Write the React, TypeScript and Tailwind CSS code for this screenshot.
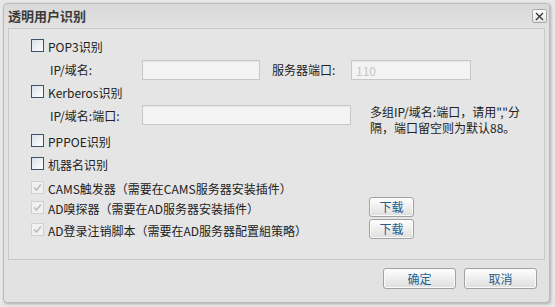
import React from "react";

const font = { fontFamily: '"Noto Sans CJK SC", "Liberation Sans", sans-serif' };

const Box = ({ disabled = false }: { disabled?: boolean }) =>
  disabled ? (
    <span className="flex h-[13px] w-[13px] shrink-0 items-center justify-center border border-[#d0d0d0] bg-[#f1f1f1]">
      <svg width="9" height="9" viewBox="0 0 9 9">
        <path d="M1 4.5 L3.5 7 L8 1.5" fill="none" stroke="#bdbdbd" strokeWidth="1.6" />
      </svg>
    </span>
  ) : (
    <span className="block h-[13px] w-[13px] shrink-0 border border-[#3a526e] bg-gradient-to-br from-[#d9e0e8] to-white" />
  );

const Check = ({ label, disabled = false }: { label: string; disabled?: boolean }) => (
  <div className="flex h-[17px] items-center gap-[4px]">
    <Box disabled={disabled} />
    <span className="pt-[2px] leading-[15px] whitespace-nowrap">{label}</span>
  </div>
);

const Btn = ({ children, w }: { children: React.ReactNode; w: string }) => (
  <button
    type="button"
    className={`${w} flex h-full items-center justify-center rounded-[3px] border border-[#a2a2a2] bg-gradient-to-b from-white to-[#dedede] text-[12px] text-[#1f5f8e] shadow-[inset_0_0_0_1px_#fafafa]`}
  >
    {children}
  </button>
);

const Field = ({ w, ph }: { w: string; ph?: string }) => (
  <input
    readOnly
    placeholder={ph}
    className={`${w} h-[20px] border border-[#c8c8c8] bg-[#f3f3f3] px-[4px] text-[12px] outline-none placeholder:text-[#c6c6c6] shadow-[inset_0_1px_1px_#e6e6e6]`}
  />
);

export default function App() {
  return (
    <div className="h-[307px] w-[555px] overflow-hidden bg-[#e8e8e8] pt-[3px] pl-[3px] text-[12px] text-[#222]" style={font}>
      <div className="flex h-[300px] w-[547px] flex-col rounded-[4px] border border-[#bcbcbc] bg-[#e2e2e2] shadow-[1px_1px_3px_rgba(0,0,0,0.25)]">
        {/* title bar */}
        <div className="flex h-[24px] items-center justify-between rounded-t-[4px] bg-gradient-to-b from-[#d9d9d9] to-[#e2e2e2] pr-[2px] pl-[4px]">
          <span className="text-[13px] font-bold text-[#3a3a3a]">透明用户识别</span>
          <span className="flex h-[14px] w-[15px] items-center justify-center rounded-[2px] border border-[#a8a8a8] bg-gradient-to-b from-white to-[#e4e4e4]">
            <svg width="9" height="9" viewBox="0 0 9 9">
              <path d="M1 1 L8 8 M8 1 L1 8" stroke="#333" strokeWidth="1.3" />
            </svg>
          </span>
        </div>

        {/* content panel */}
        <div className="mx-[4px] h-[232px] border border-[#cacaca] bg-[#e5e5e5] pt-[8px] pl-[22px]">
          <Check label="POP3识别" />

          <div className="mt-[6px] flex h-[20px] items-center">
            <span className="ml-[19px] w-[92px]">IP/域名:</span>
            <Field w="w-[118px]" />
            <span className="ml-[12px] w-[79px]">服务器端口:</span>
            <Field w="w-[120px]" ph="110" />
          </div>

          <div className="mt-[3px]">
            <Check label="Kerberos识别" />
          </div>

          <div className="mt-[4px] flex h-[28px] items-start">
            <span className="ml-[19px] mt-[3px] w-[92px]">IP/域名:端口:</span>
            <div className="mt-[1px]">
              <Field w="w-[209px]" />
            </div>
            <div className="ml-[19px] leading-[16px]">
              <div>多组IP/域名:端口，请用","分</div>
              <div>隔，端口留空则为默认88。</div>
            </div>
          </div>

          <Check label="PPPOE识别" />
          <div className="mt-[6px]">
            <Check label="机器名识别" />
          </div>
          <div className="mt-[7px]">
            <Check label="CAMS触发器（需要在CAMS服务器安装插件）" disabled />
          </div>

          <div className="mt-[1px] flex h-[20px] items-center">
            <div className="w-[338px]">
              <Check label="AD嗅探器（需要在AD服务器安装插件）" disabled />
            </div>
            <Btn w="w-[45px]">下载</Btn>
          </div>
          <div className="mt-[2px] flex h-[20px] items-center">
            <div className="w-[338px]">
              <Check label="AD登录注销脚本（需要在AD服务器配置組策略）" disabled />
            </div>
            <Btn w="w-[45px]">下载</Btn>
          </div>
        </div>

        {/* footer */}
        <div className="mt-[8px] flex h-[21px] justify-end gap-[8px] pr-[12px]">
          <Btn w="w-[73px]">确定</Btn>
          <Btn w="w-[73px]">取消</Btn>
        </div>
      </div>
    </div>
  );
}
